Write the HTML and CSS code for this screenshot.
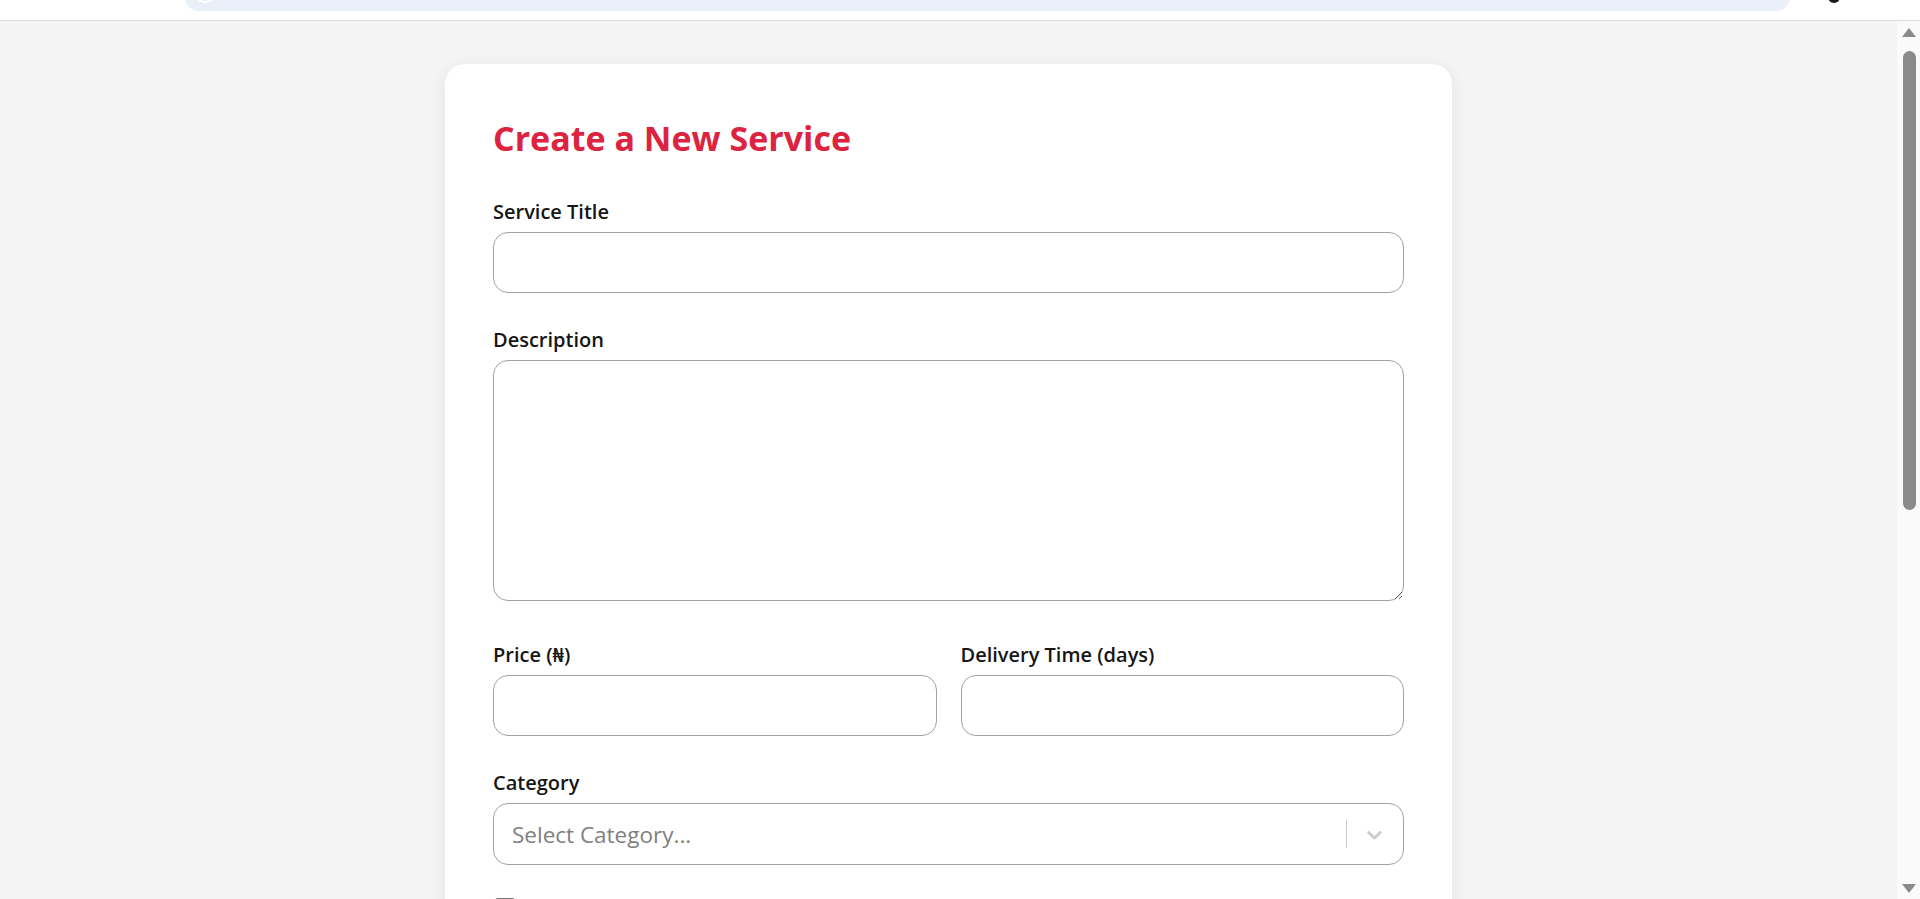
FILE: index.html
```html
<!DOCTYPE html>
<html lang="en">
<head>
<meta charset="utf-8">
<title>Create a New Service</title>
<link rel="stylesheet" href="styles.css">
</head>
<body>
<div class="app">
  <header class="topbar">
    <div class="search">
      <span class="search-icon"></span>
    </div>
    <div class="top-actions">
      <span class="user-icon"></span>
    </div>
  </header>
  <div class="body-row">
    <main class="content">
      <section class="card">
        <h1 class="card-title">Create a New Service</h1>
        <form class="service-form">
          <div class="field">
            <label class="field-label" for="title">Service Title</label>
            <input class="field-input" id="title" type="text">
          </div>
          <div class="field field-desc">
            <label class="field-label" for="desc">Description</label>
            <textarea class="field-input field-textarea" id="desc"></textarea>
          </div>
          <div class="field-row">
            <div class="field">
              <label class="field-label" for="price">Price (₦)</label>
              <input class="field-input" id="price" type="text">
            </div>
            <div class="field">
              <label class="field-label" for="days">Delivery Time (days)</label>
              <input class="field-input" id="days" type="text">
            </div>
          </div>
          <div class="field">
            <label class="field-label">Category</label>
            <div class="select">
              <div class="select-value">Select Category...</div>
              <div class="select-indicators">
                <span class="select-sep"></span>
                <span class="select-chevron">
                  <svg viewBox="0 0 20 20" width="25" height="25" aria-hidden="true"><path fill="#cccccc" d="M4.516 7.548c0.436-0.446 1.043-0.481 1.576 0l3.908 3.747 3.908-3.747c0.533-0.481 1.141-0.446 1.574 0 0.436 0.445 0.408 1.197 0 1.615-0.406 0.418-4.695 4.502-4.695 4.502-0.217 0.223-0.502 0.335-0.787 0.335s-0.57-0.112-0.789-0.335c0 0-4.287-4.084-4.695-4.502s-0.436-1.170 0-1.615z"/></svg>
                </span>
              </div>
            </div>
          </div>
          <div class="check-row">
            <span class="checkbox"></span>
          </div>
        </form>
      </section>
    </main>
    <div class="scrollbar" aria-hidden="true">
      <span class="sb-arrow sb-up"></span>
      <span class="sb-thumb"></span>
      <span class="sb-arrow sb-down"></span>
    </div>
  </div>
</div>
</body>
</html>
```
FILE: styles.css
```css
* { box-sizing: border-box; }

html, body {
  margin: 0;
  height: 100%;
  overflow: hidden;
}

body {
  font-family: "Open Sans", "Noto Sans", "DejaVu Sans", sans-serif;
  color: #1a1a1a;
  background: #f4f4f4;
}

.app {
  height: 100vh;
  display: flex;
  flex-direction: column;
}

/* top bar (scrolled mostly out of view) */
.topbar {
  height: 21px;
  flex: 0 0 21px;
  background: #ffffff;
  border-bottom: 1px solid #dedede;
  display: flex;
  align-items: flex-end;
  overflow: hidden;
  padding: 0 0 9px 185px;
}

.search {
  width: 1605px;
  height: 44px;
  flex: 0 0 1605px;
  background: #ebeff9;
  border-radius: 0 0 14px 14px;
  display: flex;
  align-items: flex-end;
  padding: 0 0 8px 8px;
}

.search-icon {
  width: 24px;
  height: 24px;
  border-radius: 50%;
  border: 2px solid #ffffff;
}

.top-actions {
  flex: 1;
  display: flex;
  align-items: flex-end;
  padding-left: 38px;
  margin-bottom: 8px;
}

.user-icon {
  width: 12px;
  height: 12px;
  border-radius: 50%;
  background: #1a1a1a;
}

/* main area */
.body-row {
  flex: 1;
  display: flex;
  min-height: 0;
}

.content {
  flex: 1;
  padding-top: 43px;
  overflow: hidden;
}

.card {
  width: 1007px;
  margin: 0 auto;
  background: #ffffff;
  border-radius: 20px;
  box-shadow: 0 4px 18px rgba(0, 0, 0, 0.07);
  padding: 52px 48px 48px;
}

.card-title {
  margin: 0 0 39px;
  font-size: 34px;
  line-height: 44px;
  font-weight: 700;
  color: #dc2340;
  letter-spacing: 0;
}

.service-form {
  display: flex;
  flex-direction: column;
  gap: 34px;
}

.field {
  display: flex;
  flex-direction: column;
  gap: 8px;
}

.field-desc {
  margin-bottom: 7px;
}

.field-label {
  font-size: 20px;
  line-height: 25px;
  font-weight: 600;
  color: #161616;
}

.field-input {
  height: 61px;
  width: 100%;
  border: 1px solid #a2a2a2;
  border-radius: 15px;
  background: #ffffff;
  font-family: inherit;
  font-size: 20px;
  padding: 0 18px;
  outline: none;
  display: block;
}

.field-textarea {
  height: 241px;
  padding: 12px 18px;
  resize: vertical;
}

.field-row {
  display: grid;
  grid-template-columns: 1fr 1fr;
  gap: 24px;
}

/* react-select like control */
.select {
  height: 62px;
  border: 1px solid #a2a2a2;
  border-radius: 15px;
  display: flex;
  align-items: center;
  background: #ffffff;
}

.select-value {
  flex: 1;
  padding-left: 18px;
  font-size: 22.5px;
  color: #808080;
}

.select-indicators {
  display: flex;
  align-items: center;
  align-self: stretch;
}

.select-sep {
  width: 1px;
  height: 28px;
  background: #cccccc;
}

.select-chevron {
  display: flex;
  padding: 0 16px 0 15px;
}

.check-row {
  display: flex;
  padding-left: 2px;
  margin-top: -1px;
}

.checkbox {
  width: 20px;
  height: 20px;
  border: 2px solid #767676;
  border-radius: 3px;
}

/* scrollbar rail */
.scrollbar {
  width: 23px;
  flex: 0 0 23px;
  background: #fafafa;
  display: flex;
  flex-direction: column;
  align-items: center;
  padding: 7px 0 6px 1px;
}

.sb-arrow {
  width: 0;
  height: 0;
  border-left: 7px solid transparent;
  border-right: 7px solid transparent;
}

.sb-up {
  border-bottom: 9px solid #8a8a8a;
}

.sb-down {
  border-top: 9px solid #8a8a8a;
  margin-top: auto;
}

.sb-thumb {
  width: 13px;
  height: 459px;
  margin-top: 14px;
  border-radius: 7px;
  background: #8a8a8a;
}
```
